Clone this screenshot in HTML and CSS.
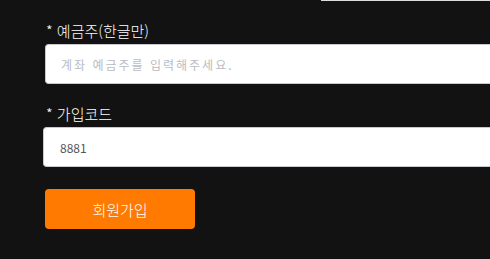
FILE: index.html
```html
<!DOCTYPE html>
<html lang="ko">
<head>
<meta charset="utf-8">
<link rel="stylesheet" href="styles.css">
</head>
<body>
<div class="page">
  <div class="prev-edge"></div>
  <div class="field field-name">
    <label class="label">* 예금주(한글만)</label>
    <input class="input" type="text" placeholder="계좌 예금주를 입력해주세요.">
  </div>
  <div class="field field-code">
    <label class="label">* 가입코드</label>
    <input class="input input-code" type="text" value="8881">
  </div>
  <button class="submit" type="button">회원가입</button>
</div>
</body>
</html>
```
FILE: styles.css
```css
html, body {
  margin: 0;
  padding: 0;
  background: #121212;
}
body {
  width: 490px;
  height: 259px;
  overflow: hidden;
  font-family: "Noto Sans CJK KR", "Noto Sans", sans-serif;
}
.page {
  display: flex;
  flex-direction: column;
  align-items: flex-start;
  width: 490px;
  overflow: hidden;
}
.prev-edge {
  margin-left: 321px;
  width: 169px;
  height: 1px;
  background: #dcdcde;
}
.field {
  display: flex;
  flex-direction: column;
  align-items: flex-start;
}
.field-name {
  margin-top: 20px;
  padding-left: 45px;
}
.field-code {
  margin-top: 20px;
  padding-left: 43px;
}
.label {
  color: #ffffff;
  font-size: 15px;
  font-weight: 300;
  line-height: 20px;
  margin-left: 1px;
  margin-bottom: 3px;
}
.field-code .label {
  margin-left: 3px;
}
.input {
  box-sizing: border-box;
  width: 447px;
  height: 40px;
  border: 1px solid #c9cad0;
  border-right: none;
  border-radius: 4px 0 0 4px;
  background: #ffffff;
  padding: 0 15px;
  font-family: "Noto Sans CJK KR", "Noto Sans", sans-serif;
  font-size: 12px;
  color: #555555;
  outline: none;
}
.input-code {
  width: 447px;
  padding-left: 16px;
}
.input::placeholder {
  color: #b9bcc4;
  letter-spacing: 2px;
}
.submit {
  margin-top: 22px;
  margin-left: 45px;
  width: 150px;
  height: 40px;
  border: none;
  border-radius: 4px;
  background: #ff7a00;
  color: #ffffff;
  font-family: "Noto Sans CJK KR", "Noto Sans", sans-serif;
  font-size: 15px;
  font-weight: 300;
  padding: 0;
}
```
